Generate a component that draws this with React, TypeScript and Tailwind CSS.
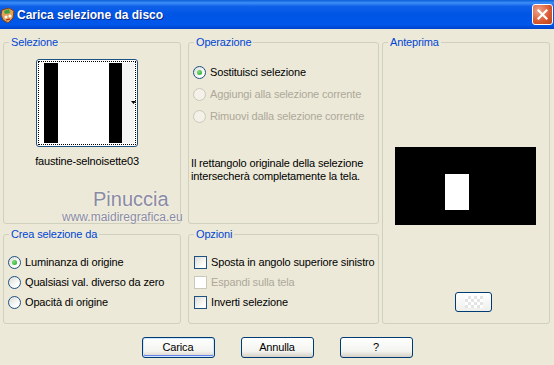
import React from 'react'

function Radio({ checked, disabled }: { checked?: boolean; disabled?: boolean }) {
  return (
    <span
      className={`flex h-[13px] w-[13px] shrink-0 items-center justify-center rounded-full border ${
        disabled
          ? 'border-[#CAC8BB] bg-[#F3F1E8]'
          : 'border-[#1C5180] bg-[linear-gradient(135deg,#DCDCD7,#FFFFFF_75%)]'
      }`}
    >
      {checked && (
        <span className="h-[5px] w-[5px] rounded-full bg-[radial-gradient(circle_at_35%_35%,#7BE07A,#21A121)]" />
      )}
    </span>
  )
}

function Check({ disabled }: { disabled?: boolean }) {
  return (
    <span
      className={`h-[13px] w-[13px] shrink-0 border ${
        disabled
          ? 'border-[#CAC8BB] bg-white'
          : 'border-[#1C5180] bg-[linear-gradient(135deg,#DCDCD7,#FFFFFF_80%)]'
      }`}
    />
  )
}

function Group({ title, className, children }: { title: string; className: string; children?: React.ReactNode }) {
  return (
    <fieldset className={`relative rounded-[3px] border border-[#D0D0BF] ${className}`}>
      <legend className="ml-[5px] px-[2px] leading-[13px] text-[#0046D5]">{title}</legend>
      {children}
    </fieldset>
  )
}

function XpButton({ label, primary }: { label: string; primary?: boolean }) {
  return (
    <button
      className={`h-[21px] w-[73px] rounded-[3px] border border-[#003C74] bg-[linear-gradient(#FFFFFF,#F3F3EF_70%,#D6D0C5)] text-black ${
        primary ? 'shadow-[inset_0_0_0_1px_#CEE7FF,inset_0_-1px_0_1px_#6982EE]' : ''
      }`}
    >
      {label}
    </button>
  )
}

export default function App() {
  return (
    <div className="h-[365px] w-[554px] overflow-hidden whitespace-nowrap bg-[#ECE9D8] text-[11px] tracking-[-0.15px] text-black font-['Liberation_Sans',Arial,sans-serif]">
      {/* Title bar */}
      <div className="flex h-[29px] items-center bg-[linear-gradient(#0A5FD8,#3D8EF8_10%,#0F60E8_22%,#0055E5_50%,#0057EA_85%,#0043CC)]">
        <svg width="16" height="17" viewBox="0 0 16 17" className="mt-[1px]">
          <path d="M2 3 L9 1 L14 4 L13 11 L8 16 L3 13 L1 8 Z" fill="#E2A05A" stroke="#7A3E12" strokeWidth="1" />
          <path d="M4 4 L9 2 L10 6 L5 7 Z" fill="#3FA13A" />
          <circle cx="6" cy="10" r="1.5" fill="#FFFFFF" />
          <circle cx="10" cy="9" r="1.5" fill="#FFFFFF" />
          <path d="M6 13 L10 12" stroke="#B3261E" strokeWidth="1.2" />
        </svg>
        <span className="ml-[1px] text-[12px] font-bold tracking-normal text-white [text-shadow:1px_1px_0_#0A2A8C]">
          Carica selezione da disco
        </span>
        <div className="ml-auto mr-[1px] flex h-[21px] w-[21px] items-center justify-center rounded-[3px] border border-white bg-[radial-gradient(circle_at_30%_30%,#F0A48A,#D8582F_60%,#B8401A)]">
          <svg width="11" height="11" viewBox="0 0 11 11">
            <path d="M1.5 1.5 L9.5 9.5 M9.5 1.5 L1.5 9.5" stroke="white" strokeWidth="2.2" strokeLinecap="square" />
          </svg>
        </div>
      </div>

      {/* Groups */}
      <div className="flex pl-[3px] pt-[7px]">
        <div className="flex w-[178px] flex-col gap-[4px]">
          <Group title="Selezione" className="h-[188px]">
            <div className="relative ml-[32px] mt-[10px] h-[88px] w-[102px] rounded-[3px] border border-[#1C5180] bg-white p-[1px]">
              <div className="h-full border border-dotted border-black p-[1px]">
                <div className="flex h-full">
                  <div className="w-[4px] bg-white" />
                  <div className="w-[14px] bg-black" />
                  <div className="w-[51px] bg-white" />
                  <div className="w-[13px] bg-black" />
                  <div className="flex-1 bg-[#F4F4F4]" />
                </div>
              </div>
              <svg width="5" height="3" viewBox="0 0 5 3" className="absolute left-[94px] top-[41px]">
                <path d="M0 0 H5 L2.5 3 Z" fill="black" />
              </svg>
            </div>
            <div className="ml-[32px] mt-[8px] flex w-[102px] justify-center leading-[13px]">
              faustine-selnoisette03
            </div>
            <div className="absolute left-[89px] top-[139px] text-[20px] font-medium leading-[22px] tracking-normal text-[#8A8AA2] [text-shadow:0_0_2px_#FFFFFF]">
              Pinuccia
            </div>
            <div className="absolute left-[58px] top-[162px] text-[12px] leading-[13px] tracking-normal text-[#8A8AA2] [text-shadow:0_0_2px_#FFFFFF]">
              www.maidiregrafica.eu
            </div>
          </Group>
          <Group title="Crea selezione da" className="h-[96px]">
            <div className="ml-[4px] mt-[11px] flex flex-col">
              <div className="flex h-[20px] items-center gap-[4px]">
                <Radio checked />
                <span>Luminanza di origine</span>
              </div>
              <div className="flex h-[20px] items-center gap-[4px]">
                <Radio />
                <span>Qualsiasi val. diverso da zero</span>
              </div>
              <div className="flex h-[20px] items-center gap-[4px]">
                <Radio />
                <span>Opacità di origine</span>
              </div>
            </div>
          </Group>
        </div>

        <div className="ml-[7px] flex w-[191px] flex-col gap-[4px]">
          <Group title="Operazione" className="h-[188px]">
            <div className="ml-[4px] mt-[12px] flex flex-col">
              <div className="flex h-[22px] items-center gap-[4px]">
                <Radio checked />
                <span>Sostituisci selezione</span>
              </div>
              <div className="flex h-[22px] items-center gap-[4px] text-[#ACA899]">
                <Radio disabled />
                <span>Aggiungi alla selezione corrente</span>
              </div>
              <div className="flex h-[22px] items-center gap-[4px] text-[#ACA899]">
                <Radio disabled />
                <span>Rimuovi dalla selezione corrente</span>
              </div>
            </div>
            <p className="ml-[2px] mt-[30px] leading-[13px]">
              Il rettangolo originale della selezione
              <br />
              intersecherà completamente la tela.
            </p>
          </Group>
          <Group title="Opzioni" className="h-[96px]">
            <div className="ml-[5px] mt-[11px] flex flex-col">
              <div className="flex h-[20px] items-center gap-[4px]">
                <Check />
                <span>Sposta in angolo superiore sinistro</span>
              </div>
              <div className="flex h-[20px] items-center gap-[4px] text-[#ACA899]">
                <Check disabled />
                <span>Espandi sulla tela</span>
              </div>
              <div className="flex h-[20px] items-center gap-[4px]">
                <Check />
                <span>Inverti selezione</span>
              </div>
            </div>
          </Group>
        </div>

        <div className="ml-[3px] w-[168px]">
          <Group title="Anteprima" className="h-[288px]">
            <div className="ml-[12px] mt-[98px] h-[78px] w-[141px] bg-black pl-[50px] pt-[27px]">
              <div className="h-[36px] w-[24px] bg-white" />
            </div>
            <div className="ml-[72px] mt-[67px] flex h-[20px] w-[37px] items-center justify-center rounded-[3px] border border-[#003C74] bg-[linear-gradient(#FFFFFF,#EEEEEA)]">
              <div className="h-[12px] w-[18px] bg-[conic-gradient(#E4E4E4_25%,#FFFFFF_0_50%,#E4E4E4_0_75%,#FFFFFF_0)] bg-[length:6px_6px]" />
            </div>
          </Group>
        </div>
      </div>

      {/* Buttons */}
      <div className="mt-[13px] flex justify-center gap-[26px]">
        <XpButton label="Carica" primary />
        <XpButton label="Annulla" />
        <XpButton label="?" />
      </div>
    </div>
  )
}
